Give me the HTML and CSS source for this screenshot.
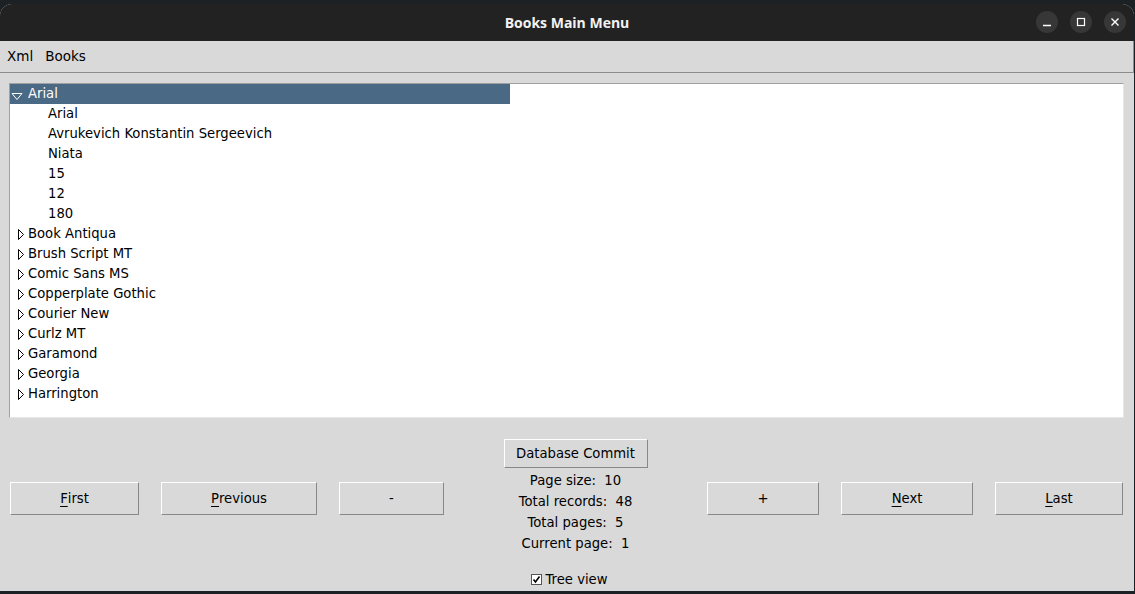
FILE: index.html
```html
<!DOCTYPE html>
<html>
<head>
<meta charset="utf-8">
<link rel="stylesheet" href="styles.css">
</head>
<body>
<div class="desk">
  <div class="window">
    <div class="titlebar">
      <div class="title">Books Main Menu</div>
      <div class="controls">
        <span class="ctl"><svg width="22" height="22" viewBox="0 0 22 22"><line x1="7" y1="14.5" x2="15" y2="14.5" stroke="#fff" stroke-width="1.3"/></svg></span>
        <span class="ctl"><svg width="22" height="22" viewBox="0 0 22 22"><rect x="7.5" y="7.5" width="7" height="7" fill="none" stroke="#fff" stroke-width="1.2"/></svg></span>
        <span class="ctl"><svg width="22" height="22" viewBox="0 0 22 22"><path d="M7.5 7.5 L14.5 14.5 M14.5 7.5 L7.5 14.5" stroke="#fff" stroke-width="1.4"/></svg></span>
      </div>
    </div>
    <div class="menubar">
      <span class="menuitem">Xml</span>
      <span class="menuitem">Books</span>
    </div>
    <div class="content">
      <div class="tree">
        <div class="row selected"><svg class="tri" width="12" height="10" viewBox="0 0 12 10"><path d="M1 2.5 H11 L6 8.5 Z" fill="none" stroke="#fff" stroke-width="1"/></svg><span>Arial</span></div>
        <div class="row child">Arial</div>
        <div class="row child">Avrukevich Konstantin Sergeevich</div>
        <div class="row child">Niata</div>
        <div class="row child">15</div>
        <div class="row child">12</div>
        <div class="row child">180</div>
        <div class="row node"><svg class="tri2" width="8" height="13" viewBox="0 0 8 13"><path d="M1.5 1.5 L6.5 6.5 L1.5 11.5 Z" fill="none" stroke="#000" stroke-width="1"/></svg><span>Book Antiqua</span></div>
        <div class="row node"><svg class="tri2" width="8" height="13" viewBox="0 0 8 13"><path d="M1.5 1.5 L6.5 6.5 L1.5 11.5 Z" fill="none" stroke="#000" stroke-width="1"/></svg><span>Brush Script MT</span></div>
        <div class="row node"><svg class="tri2" width="8" height="13" viewBox="0 0 8 13"><path d="M1.5 1.5 L6.5 6.5 L1.5 11.5 Z" fill="none" stroke="#000" stroke-width="1"/></svg><span>Comic Sans MS</span></div>
        <div class="row node"><svg class="tri2" width="8" height="13" viewBox="0 0 8 13"><path d="M1.5 1.5 L6.5 6.5 L1.5 11.5 Z" fill="none" stroke="#000" stroke-width="1"/></svg><span>Copperplate Gothic</span></div>
        <div class="row node"><svg class="tri2" width="8" height="13" viewBox="0 0 8 13"><path d="M1.5 1.5 L6.5 6.5 L1.5 11.5 Z" fill="none" stroke="#000" stroke-width="1"/></svg><span>Courier New</span></div>
        <div class="row node"><svg class="tri2" width="8" height="13" viewBox="0 0 8 13"><path d="M1.5 1.5 L6.5 6.5 L1.5 11.5 Z" fill="none" stroke="#000" stroke-width="1"/></svg><span>Curlz MT</span></div>
        <div class="row node"><svg class="tri2" width="8" height="13" viewBox="0 0 8 13"><path d="M1.5 1.5 L6.5 6.5 L1.5 11.5 Z" fill="none" stroke="#000" stroke-width="1"/></svg><span>Garamond</span></div>
        <div class="row node"><svg class="tri2" width="8" height="13" viewBox="0 0 8 13"><path d="M1.5 1.5 L6.5 6.5 L1.5 11.5 Z" fill="none" stroke="#000" stroke-width="1"/></svg><span>Georgia</span></div>
        <div class="row node"><svg class="tri2" width="8" height="13" viewBox="0 0 8 13"><path d="M1.5 1.5 L6.5 6.5 L1.5 11.5 Z" fill="none" stroke="#000" stroke-width="1"/></svg><span>Harrington</span></div>
      </div>
      <div class="bottom">
        <div class="group left">
          <div class="btn w-first"><u>F</u>irst</div>
          <div class="btn w-prev"><u>P</u>revious</div>
          <div class="btn w-minus">-</div>
        </div>
        <div class="center">
          <div class="btn commit">Database Commit</div>
          <div class="info">Page size:&nbsp; 10</div>
          <div class="info">Total records:&nbsp; 48</div>
          <div class="info">Total pages:&nbsp; 5</div>
          <div class="info">Current page:&nbsp; 1</div>
          <div class="check"><span class="box"><svg width="9" height="9" viewBox="0 0 9 9"><path d="M1.5 4.5 L3.5 7 L7.5 1.5" fill="none" stroke="#000" stroke-width="1.6"/></svg></span>Tree view</div>
        </div>
        <div class="group right">
          <div class="btn w-plus">+</div>
          <div class="btn w-next"><u>N</u>ext</div>
          <div class="btn w-last"><u>L</u>ast</div>
        </div>
      </div>
    </div>
  </div>
</div>
</body>
</html>
```
FILE: styles.css
```css
html, body {
  margin: 0;
  padding: 0;
}
body {
  background: #1c2126;
  width: 1135px;
  height: 594px;
  overflow: hidden;
  font-family: "DejaVu Sans", "Noto Sans", sans-serif;
  font-size: 13.2px;
  color: #000;
}
.desk {
  padding-top: 4px;
}
.window {
  width: 1134px;
  height: 587px;
  background: #d9d9d9;
  border-radius: 12px 12px 0 0;
  display: flex;
  flex-direction: column;
  overflow: hidden;
}
.titlebar {
  height: 37px;
  background: #222222;
  display: flex;
  align-items: center;
  justify-content: center;
  position: relative;
  flex: none;
}
.title {
  color: #f2f2f2;
  font-family: "Open Sans", "DejaVu Sans", sans-serif;
  font-weight: 700;
  font-size: 14px;
}
.controls {
  position: absolute;
  right: 8px;
  top: 7px;
  display: flex;
  gap: 12px;
}
.ctl {
  width: 22px;
  height: 22px;
  border-radius: 50%;
  background: #373737;
  display: block;
}
.ctl svg { display: block; }
.menubar {
  box-sizing: border-box;
  height: 32px;
  padding-bottom: 2px;
  border-bottom: 1px solid #8c8c8c;
  border-right: 1px solid #8c8c8c;
  display: flex;
  align-items: center;
  padding-left: 7px;
  gap: 12px;
  font-size: 13.5px;
  flex: none;
}
.content {
  padding: 10px 10px 0 9px;
  flex: 1;
  display: flex;
  flex-direction: column;
}
.tree {
  height: 333px;
  background: #fff;
  border-top: 1px solid #a0a0a0;
  border-left: 1px solid #a0a0a0;
  border-right: 1px solid #e6e6e6;
  border-bottom: 1px solid #e6e6e6;
  flex: none;
}
.row {
  box-sizing: border-box;
  height: 20px;
  padding-bottom: 2px;
  white-space: nowrap;
  display: flex;
  align-items: center;
}
.selected {
  width: 500px;
  background: #4a6984;
  color: #fff;
}
.tri {
  margin-left: 1px;
  margin-right: 5px;
  margin-top: 6px;
}
.child {
  padding-left: 38px;
}
.node .tri2 {
  margin-left: 7px;
  margin-right: 3px;
  margin-top: 2px;
}
.bottom {
  flex: 1;
  display: flex;
  align-items: stretch;
  padding-top: 21px;
}
.group {
  display: flex;
  gap: 22px;
  align-items: flex-start;
  padding-top: 43px;
}
.left { margin-left: 1px; }
.right { margin-right: 1px; }
.btn {
  box-sizing: border-box;
  height: 33px;
  padding-bottom: 0;
  border-top: 1px solid #fff;
  border-left: 1px solid #fff;
  border-right: 1px solid #888;
  border-bottom: 1px solid #888;
  display: flex;
  align-items: center;
  justify-content: center;
}
.btn u {
  text-decoration-thickness: 1px;
  text-underline-offset: 3px;
}
.w-first { width: 129px; }
.w-prev { width: 156px; }
.w-minus { width: 105px; }
.w-plus { width: 112px; }
.w-next { width: 132px; }
.w-last { width: 128px; }
.center {
  flex: 1;
  display: flex;
  flex-direction: column;
  align-items: center;
}
.commit {
  width: 144px;
  height: 29px;
  margin-bottom: 2px;
}
.info {
  height: 21px;
  line-height: 21px;
}
.check {
  margin-top: 18px;
  display: flex;
  align-items: center;
  margin-right: 12px;
}
.box {
  width: 9px;
  height: 9px;
  background: #fff;
  border: 1px solid #555;
  margin-right: 3px;
  display: block;
}
.box svg { display: block; }
```
